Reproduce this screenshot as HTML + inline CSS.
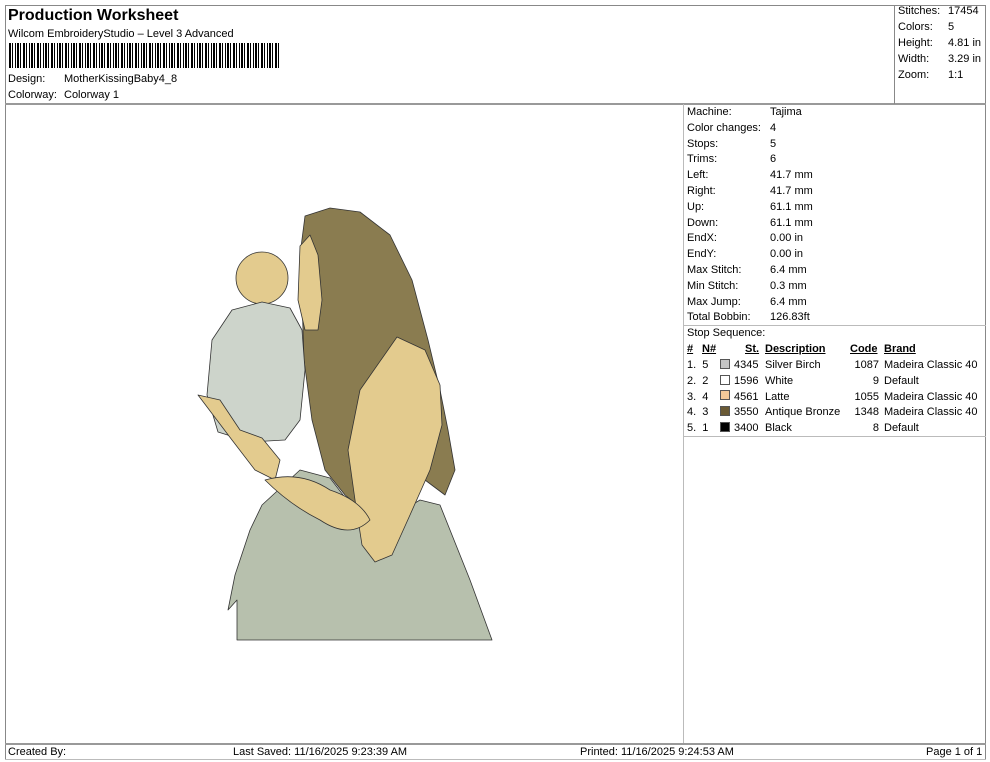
<!DOCTYPE html>
<html><head><meta charset="utf-8"><style>
*{margin:0;padding:0;box-sizing:border-box}
body{width:990px;height:762px;background:#fff;font-family:"Liberation Sans",sans-serif;font-size:11px;color:#000;position:relative;overflow:hidden}
.a{position:absolute;white-space:nowrap;line-height:13px}
.l{position:absolute;background:#888}
u{text-decoration:underline}
.sw{position:absolute;width:10px;height:10px;border:1px solid #555}
</style></head><body>
<!-- frame lines -->
<div class="l" style="left:5px;top:5px;width:981px;height:1px"></div>
<div class="l" style="left:5px;top:5px;width:1px;height:755px"></div>
<div class="l" style="left:985px;top:5px;width:1px;height:755px"></div>
<div class="l" style="left:5px;top:103px;width:981px;height:2px;background:#999"></div>
<div class="l" style="left:894px;top:5px;width:1px;height:99px"></div>
<div class="l" style="left:683px;top:104px;width:1px;height:640px;background:#bbb"></div>
<div class="l" style="left:683px;top:325px;width:303px;height:1px;background:#bbb"></div>
<div class="l" style="left:683px;top:436px;width:303px;height:1px;background:#bbb"></div>
<div class="l" style="left:5px;top:743px;width:981px;height:2px;background:#999"></div>
<div class="l" style="left:5px;top:759px;width:981px;height:1px;background:#bbb"></div>

<div class="a" style="left:8px;top:7px;font-size:16px;font-weight:bold;line-height:18px">Production Worksheet</div>
<div class="a" style="left:8px;top:28px">Wilcom EmbroideryStudio – Level 3 Advanced</div>
<div style="position:absolute;left:9px;top:43px;width:272px;height:25px;background:repeating-linear-gradient(90deg,#000 0 2px,#fff 2px 3px,#000 3px 4px,#fff 4px 6px,#000 6px 7px,#fff 7px 8px,#000 8px 10px,#fff 10px 11px,#000 11px 12px,#fff 12px 14px)"></div>
<div class="a" style="left:8px;top:73px">Design:</div><div class="a" style="left:64px;top:73px">MotherKissingBaby4_8</div>
<div class="a" style="left:8px;top:89px">Colorway:</div><div class="a" style="left:64px;top:89px">Colorway 1</div>

<div class="a" style="left:898px;top:5px">Stitches:</div><div class="a" style="left:948px;top:5px">17454</div>
<div class="a" style="left:898px;top:21px">Colors:</div><div class="a" style="left:948px;top:21px">5</div>
<div class="a" style="left:898px;top:37px">Height:</div><div class="a" style="left:948px;top:37px">4.81 in</div>
<div class="a" style="left:898px;top:53px">Width:</div><div class="a" style="left:948px;top:53px">3.29 in</div>
<div class="a" style="left:898px;top:69px">Zoom:</div><div class="a" style="left:948px;top:69px">1:1</div>

<div style="position:absolute;left:687px;top:105px;line-height:15.8px">
Machine:<br>Color changes:<br>Stops:<br>Trims:<br>Left:<br>Right:<br>Up:<br>Down:<br>EndX:<br>EndY:<br>Max Stitch:<br>Min Stitch:<br>Max Jump:<br>Total Bobbin:<br>Stop Sequence:</div>
<div style="position:absolute;left:770px;top:105px;line-height:15.8px">
Tajima<br>4<br>5<br>6<br>41.7 mm<br>41.7 mm<br>61.1 mm<br>61.1 mm<br>0.00 in<br>0.00 in<br>6.4 mm<br>0.3 mm<br>6.4 mm<br>126.83ft</div>

<div class="a" style="left:687px;top:343px;font-weight:bold"><u>#</u></div>
<div class="a" style="left:702px;top:343px;font-weight:bold"><u>N#</u></div>
<div class="a" style="left:745px;top:343px;font-weight:bold"><u>St.</u></div>
<div class="a" style="left:765px;top:343px;font-weight:bold"><u>Description</u></div>
<div class="a" style="left:850px;top:343px;font-weight:bold"><u>Code</u></div>
<div class="a" style="left:884px;top:343px;font-weight:bold"><u>Brand</u></div>
<div style="position:absolute;left:687px;top:358px;line-height:15.8px">1.&nbsp; 5<br>2.&nbsp; 2<br>3.&nbsp; 4<br>4.&nbsp; 3<br>5.&nbsp; 1</div>
<div class="sw" style="left:720px;top:359px;background:#c4c4c4"></div>
<div class="sw" style="left:720px;top:375px;background:#fff"></div>
<div class="sw" style="left:720px;top:390px;background:#f2c99a"></div>
<div class="sw" style="left:720px;top:406px;background:#6a5a35"></div>
<div class="sw" style="left:720px;top:422px;background:#000"></div>
<div style="position:absolute;left:734px;top:358px;line-height:15.8px">4345<br>1596<br>4561<br>3550<br>3400</div>
<div style="position:absolute;left:765px;top:358px;line-height:15.8px">Silver Birch<br>White<br>Latte<br>Antique Bronze<br>Black</div>
<div style="position:absolute;left:840px;width:39px;text-align:right;top:358px;line-height:15.8px">1087<br>9<br>1055<br>1348<br>8</div>
<div style="position:absolute;left:884px;top:358px;line-height:15.8px">Madeira Classic 40<br>Default<br>Madeira Classic 40<br>Madeira Classic 40<br>Default</div>

<div class="a" style="left:8px;top:746px">Created By:</div>
<div class="a" style="left:233px;top:746px">Last Saved: 11/16/2025 9:23:39 AM</div>
<div class="a" style="left:580px;top:746px">Printed: 11/16/2025 9:24:53 AM</div>
<div class="a" style="left:926px;top:746px">Page 1 of 1</div>

<svg style="position:absolute;left:0;top:0" width="990" height="762" stroke="#333" stroke-width="0.8" stroke-linejoin="round">
<path d="M237,640 L237,600 L228,610 L235,575 L250,530 L262,505 L300,470 L330,478 L370,530 L420,500 L440,505 L470,580 L492,640 Z" fill="#b7c0ad"/>
<path d="M305,216 L330,208 L360,212 L390,235 L412,280 L428,340 L440,390 L448,430 L455,470 L445,495 L425,480 L405,490 L395,530 L370,515 L345,495 L325,470 L312,420 L304,360 L302,300 L300,255 Z" fill="#8a7c50"/>
<path d="M397,337 L425,350 L440,385 L442,425 L430,470 L410,515 L392,555 L375,562 L362,545 L355,500 L348,450 L360,390 Z" fill="#e3cb8e"/>
<path d="M300,246 L310,235 L318,255 L322,300 L318,330 L305,330 L298,300 Z" fill="#e3cb8e"/>
<circle cx="262" cy="278" r="26" fill="#e3cb8e"/>
<path d="M207,395 L212,340 L232,310 L262,302 L290,308 L302,330 L305,370 L300,420 L285,440 L250,442 L218,432 Z" fill="#cdd4cb"/>
<path d="M198,395 L220,400 L240,430 L262,438 L280,460 L275,480 L255,470 L232,440 Z" fill="#e3cb8e"/>
<path d="M265,480 Q300,470 330,490 Q360,500 370,520 Q350,540 320,520 Q290,505 265,480 Z" fill="#e3cb8e"/>
</svg>
</body></html>
